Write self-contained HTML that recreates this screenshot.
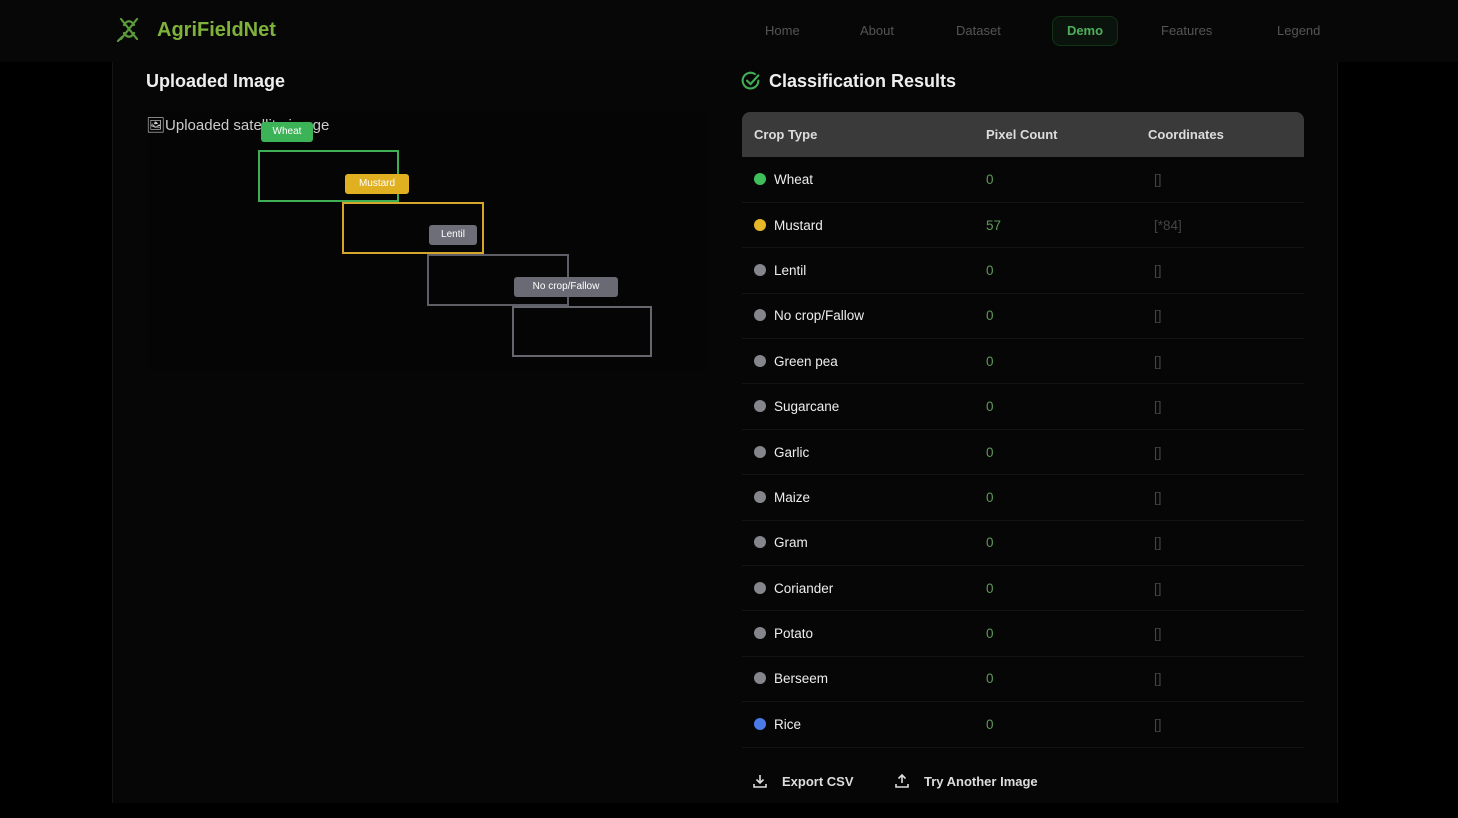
<!DOCTYPE html>
<html><head><meta charset="utf-8"><style>
*{margin:0;padding:0;box-sizing:border-box}
body{width:1458px;height:818px;background:#000;font-family:"Liberation Sans",sans-serif;color:#eee;position:relative;overflow:hidden}
.nav{position:absolute;left:0;top:0;width:1458px;height:62px;background:#070707}
.logo{position:absolute;left:115px;top:16px;display:flex;align-items:center;gap:14px;font-weight:bold;font-size:20px;color:#7fb23a}
.nav a{position:absolute;top:23px;font-size:13px;color:#555}
.demo{position:absolute;left:1052px;top:16px;width:66px;height:30px;border:1px solid #123318;border-radius:8px;background:#0b140c;color:#4fae5a;font-size:13px;font-weight:bold;text-align:center;line-height:28px}
.panel{position:absolute;left:112px;top:62px;width:1226px;height:741px;background:#060606;border-left:1px solid #141414;border-right:1px solid #141414}
h2{position:absolute;font-size:18px;font-weight:bold;color:#eee}
.imgbox{position:absolute;left:146px;top:112px;width:560px;height:258px;background:#050505}
.alt{position:absolute;left:146px;top:116px;font-size:15px;color:#ccc}
.box{position:absolute;border:2px solid}
.tag{position:absolute;font-size:10px;color:#fff;border-radius:3px;text-align:center;line-height:20px;height:20px}
table{position:absolute;left:742px;top:112px;width:562px;border-collapse:collapse;font-size:13.5px}
th{background:#3a3a3a;height:45px;text-align:left;font-weight:bold;color:#ddd;font-size:13px}
th:first-child{border-radius:8px 0 0 0;padding-left:12px}th:last-child{border-radius:0 8px 0 0}
td{height:45.4px;border-bottom:1px solid #131313;color:#eee}
td:first-child{padding-left:12px}
td.n{color:#5f9a5a}td.c{color:#444;padding-left:6px}
.dot{display:inline-block;width:12px;height:12px;border-radius:50%;background:#85858c;vertical-align:-1px;margin-right:8px}
.btn{position:absolute;top:773px;font-size:13px;font-weight:bold;color:#ddd;display:flex;align-items:center;gap:14px}
</style></head><body>
<div class="nav">
<div class="logo"><svg width="28" height="28" viewBox="0 0 28 28" fill="none" stroke="#5a9a3a" stroke-width="2.2" stroke-linecap="round"><path d="M6 3l16 20M22 3L6 23M9 9c3-5 7-5 10 0M9 17c3 5 7 5 10 0M3 25l4-4"/></svg><span>AgriFieldNet</span></div>
<a style="left:765px">Home</a><a style="left:860px">About</a><a style="left:956px">Dataset</a>
<div class="demo">Demo</div>
<a style="left:1161px">Features</a><a style="left:1277px">Legend</a>
</div>
<div class="panel"></div>
<h2 style="left:146px;top:71px">Uploaded Image</h2>
<div class="imgbox"></div>
<div class="alt">🖼Uploaded satellite image</div>
<div class="box" style="left:258px;top:150px;width:141px;height:52px;border-color:#3fae55"></div>
<div class="tag" style="left:261px;top:122px;width:52px;background:#3db358">Wheat</div>
<div class="box" style="left:342px;top:202px;width:142px;height:52px;border-color:#d4a72c"></div>
<div class="tag" style="left:345px;top:174px;width:64px;background:#e0b021">Mustard</div>
<div class="box" style="left:427px;top:254px;width:142px;height:52px;border-color:#5e5e66"></div>
<div class="tag" style="left:429px;top:225px;width:48px;background:#6e6e78">Lentil</div>
<div class="box" style="left:512px;top:306px;width:140px;height:51px;border-color:#66666e"></div>
<div class="tag" style="left:514px;top:277px;width:104px;background:#6a6a74">No crop/Fallow</div>
<h2 style="left:769px;top:71px">Classification Results</h2>
<svg style="position:absolute;left:740px;top:71px" width="21" height="21" viewBox="0 0 24 24" fill="none" stroke="#3fae55" stroke-width="2.4" stroke-linecap="round"><path d="M21 11a9 9 0 1 1-4-7.5"/><path d="M8 11l4 4 9-10"/></svg>
<table>
<tr><th style="width:244px">Crop Type</th><th style="width:162px">Pixel Count</th><th>Coordinates</th></tr>
<tr><td><span class="dot" style="background:#3fbf5a"></span>Wheat</td><td class="n">0</td><td class="c">[]</td></tr>
<tr><td><span class="dot" style="background:#e6b829"></span>Mustard</td><td class="n">57</td><td class="c">[*84]</td></tr>
<tr><td><span class="dot"></span>Lentil</td><td class="n">0</td><td class="c">[]</td></tr>
<tr><td><span class="dot"></span>No crop/Fallow</td><td class="n">0</td><td class="c">[]</td></tr>
<tr><td><span class="dot"></span>Green pea</td><td class="n">0</td><td class="c">[]</td></tr>
<tr><td><span class="dot"></span>Sugarcane</td><td class="n">0</td><td class="c">[]</td></tr>
<tr><td><span class="dot"></span>Garlic</td><td class="n">0</td><td class="c">[]</td></tr>
<tr><td><span class="dot"></span>Maize</td><td class="n">0</td><td class="c">[]</td></tr>
<tr><td><span class="dot"></span>Gram</td><td class="n">0</td><td class="c">[]</td></tr>
<tr><td><span class="dot"></span>Coriander</td><td class="n">0</td><td class="c">[]</td></tr>
<tr><td><span class="dot"></span>Potato</td><td class="n">0</td><td class="c">[]</td></tr>
<tr><td><span class="dot"></span>Berseem</td><td class="n">0</td><td class="c">[]</td></tr>
<tr><td><span class="dot" style="background:#4a7be8"></span>Rice</td><td class="n">0</td><td class="c">[]</td></tr>
</table>
<div class="btn" style="left:752px"><svg width="16" height="16" viewBox="0 0 16 16" fill="none" stroke="#ddd" stroke-width="1.6"><path d="M8 2v8M4.5 6.5L8 10l3.5-3.5M2 11v3h12v-3"/></svg>Export CSV</div>
<div class="btn" style="left:894px"><svg width="16" height="16" viewBox="0 0 16 16" fill="none" stroke="#ddd" stroke-width="1.6"><path d="M8 10V2M4.5 5.5L8 2l3.5 3.5M2 11v3h12v-3"/></svg>Try Another Image</div>
</body></html>
